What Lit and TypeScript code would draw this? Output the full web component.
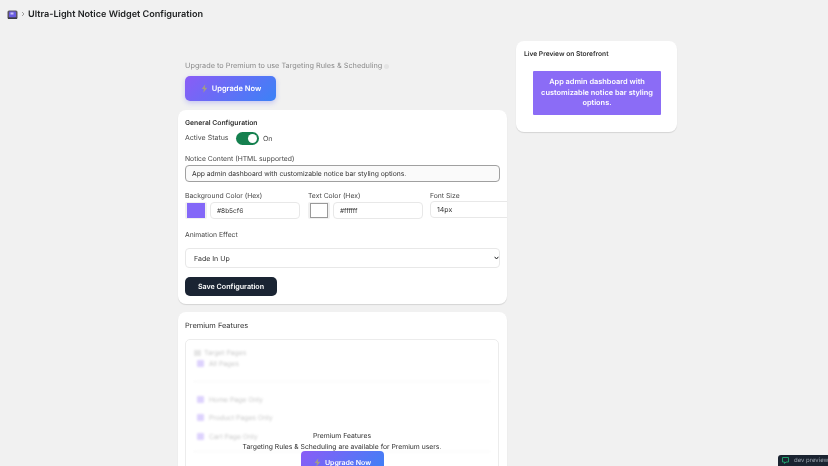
import { LitElement, html, css } from "lit";
import { customElement } from "lit/decorators.js";

const bolt = html`<svg class="bolt" viewBox="0 0 10 12" aria-hidden="true">
  <path d="M6.2 0 1 6.8h3.2L3.2 12 9 4.8H5.4z" fill="#a39c86" />
</svg>`;

const pages = ["Home Page Only", "Product Pages Only", "Cart Page Only"];

@customElement("app-root")
export class AppRoot extends LitElement {
  static styles = css`
    :host {
      display: block;
      position: relative;
      height: 466px;
      overflow: hidden;
      background: #f1f1f1;
      color: #303030;
      font-family: Inter, "Liberation Sans", sans-serif;
      font-size: 7px;
      text-rendering: geometricPrecision;
      filter: blur(0.3px);
    }
    * {
      box-sizing: border-box;
    }
    .topbar {
      display: flex;
      align-items: center;
      gap: 2px;
      height: 28px;
      padding-left: 7px;
      color: #202223;
    }
    .logo {
      width: 11px;
      height: 11px;
    }
    .crumb {
      width: 6px;
      height: 6px;
    }
    .topbar h1 {
      margin: 0;
      font-size: 9.1px;
      font-weight: 600;
    }
    .layout {
      display: flex;
      align-items: flex-start;
      gap: 9px;
      padding: 13px 0 0 178px;
    }
    .left {
      display: flex;
      flex-direction: column;
      gap: 8px;
      width: 329px;
    }
    .upgrade {
      padding: 20px 7px 0;
      margin-bottom: 1px;
    }
    .upgrade p {
      display: flex;
      align-items: center;
      gap: 2px;
      margin: 0 0 5px;
      line-height: 10px;
      color: #8a8a8a;
      font-size: 7.3px;
    }
    .upgrade p i {
      width: 5px;
      height: 5px;
      border-radius: 50%;
      background: #e4e4e4;
    }
    .btn {
      display: inline-flex;
      align-items: center;
      justify-content: center;
      gap: 4px;
      border: 0;
      padding: 0 0 0 1px;
      font-family: inherit;
      font-weight: 600;
      color: #fff;
      background: linear-gradient(135deg, #8b5cf6, #3b82f6);
      border-radius: 5px;
      text-rendering: geometricPrecision;
    }
    .btn.big {
      width: 91px;
      height: 25px;
      font-size: 7.5px;
      box-shadow: 0 2px 5px rgba(99, 102, 241, 0.3);
    }
    .bolt {
      width: 7px;
      height: 9px;
    }
    .card {
      background: #fff;
      border-radius: 8px;
      box-shadow: 0 1px 1px rgba(0, 0, 0, 0.12);
      overflow: hidden;
    }
    .general {
      height: 194px;
      padding: 8px 7px 0;
    }
    .general h2 {
      margin: 0;
      line-height: 10px;
      font-size: 6.8px;
      font-weight: 600;
    }
    label,
    .label {
      display: block;
      height: 10px;
      padding-top: 1px;
      line-height: 10px;
      color: #474747;
      font-size: 6.8px;
    }
    .status {
      display: flex;
      align-items: center;
      gap: 4px;
      margin: 4px 0 8px;
      height: 13px;
    }
    .status .label {
      padding-top: 0;
      font-size: 7px;
    }
    .status .name {
      width: 47px;
      margin-top: -1px;
    }
    .switch {
      display: flex;
      align-items: center;
      justify-content: flex-end;
      width: 23px;
      height: 13px;
      padding-right: 2px;
      border-radius: 7px;
      background: #15804f;
    }
    .switch span {
      width: 9px;
      height: 9px;
      border-radius: 50%;
      background: #fff;
    }
    .text {
      display: block;
      width: 100%;
      margin: 0;
      border: 1px solid #e8e8e8;
      border-radius: 4px;
      padding: 0 6px;
      background: #fff;
      color: #303030;
      font-family: inherit;
      font-size: 7px;
      outline: none;
      text-rendering: geometricPrecision;
    }
    .content {
      height: 17px;
      margin-top: 2px;
      border-color: #a0a0a0;
      background: #fafafa;
      font-size: 6.75px;
    }
    .colors {
      display: grid;
      grid-template-columns: 115px 114px 90px;
      gap: 8px;
      margin-top: 8px;
      margin-right: -20px;
    }
    .pair {
      display: flex;
      gap: 3px;
      margin-top: 2px;
    }
    .swatch {
      flex: none;
      width: 22px;
      height: 17px;
      padding: 1px 2px;
      border-radius: 2px;
      background: #f0f0f0;
    }
    .swatch i {
      display: block;
      width: 100%;
      height: 100%;
      background: #8468f8;
    }
    .swatch.white i {
      background: #fff;
      border: 1px solid #9a9a9a;
    }
    .pair .text {
      height: 17px;
      width: 90px;
      padding: 0 6px;
      font-size: 6.5px;
    }
    .size {
      height: 17px;
      margin-top: 1px;
    }
    .effect-label {
      margin-top: 10px;
    }
    .select-wrap {
      position: relative;
      margin-top: 9px;
    }
    select.text {
      height: 20px;
      padding: 0 8px;
      appearance: none;
    }
    .chevron {
      position: absolute;
      right: 1px;
      top: 8px;
      width: 5px;
      height: 4px;
      pointer-events: none;
    }
    .save {
      display: block;
      width: 92px;
      height: 19px;
      margin-top: 9px;
      border: 0;
      border-radius: 5px;
      background: #1a2433;
      color: #fff;
      font-family: inherit;
      font-size: 7.15px;
      font-weight: 600;
      text-rendering: geometricPrecision;
    }
    .premium {
      position: relative;
      height: 200px;
      padding: 9px 8px 0 7px;
    }
    .premium .title {
      line-height: 10px;
      color: #303030;
      font-size: 7.4px;
    }
    .locked {
      height: 180px;
      margin-top: 8px;
      padding: 8px 8px;
      border: 1px solid #ececec;
      border-radius: 5px;
    }
    .blurred {
      filter: blur(1.3px);
      opacity: 0.38;
      color: #6d6d6d;
    }
    .blurred .head {
      display: flex;
      align-items: center;
      gap: 3px;
      line-height: 9px;
      font-size: 6.8px;
    }
    .blurred .head i {
      width: 7px;
      height: 6px;
      background: #bcbcbc;
    }
    .opt {
      display: flex;
      align-items: center;
      gap: 5px;
      height: 10px;
      margin-left: 3px;
      font-size: 6.8px;
    }
    .opt i {
      width: 7px;
      height: 7px;
      border-radius: 1px;
      background: #a78bfa;
    }
    .opt.all {
      margin-top: 1px;
    }
    .rule {
      margin: 13px 0 12px;
      border-top: 1px dotted #dcdcdc;
    }
    .rule.last {
      margin-top: 9px;
    }
    .opts {
      display: flex;
      flex-direction: column;
      gap: 8.8px;
    }
    .overlay {
      position: absolute;
      left: 7px;
      right: 8px;
      top: 119px;
      text-align: center;
      line-height: 10.5px;
      color: #303030;
      font-size: 6.8px;
    }
    .btn.small {
      display: flex;
      width: 83px;
      height: 22px;
      margin: -1px auto 0;
      border-radius: 4px;
      font-size: 7px;
    }
    .right {
      width: 161px;
      height: 91px;
      padding: 8px 8px 0;
    }
    .right h2 {
      margin: 0;
      line-height: 10px;
      font-size: 6.65px;
      font-weight: 600;
    }
    .notice {
      display: flex;
      align-items: center;
      justify-content: center;
      width: 128px;
      height: 44px;
      margin: 12px 0 0 9px;
      padding: 0 6px;
      border-radius: 1px;
      background: #8b6cf6;
      color: #fff;
      text-align: center;
      font-size: 7.4px;
      font-weight: 600;
      line-height: 10.5px;
    }
    .dev {
      position: absolute;
      right: 0;
      bottom: 0;
      display: flex;
      align-items: center;
      gap: 5px;
      width: 50px;
      height: 11px;
      padding-left: 4px;
      border-radius: 3px 0 0 0;
      background: #1a2330;
      color: #9aa3ad;
      font-size: 6px;
      white-space: nowrap;
      overflow: hidden;
    }
    .dev svg {
      flex: none;
      width: 7px;
      height: 7px;
    }
  `;

  protected render() {
    return html`
      <header class="topbar">
        <svg class="logo" viewBox="0 0 11 11" aria-hidden="true">
          <rect x="0.5" y="1.5" width="10" height="8.5" rx="1.5" fill="#5b5560" />
          <rect x="2" y="2.5" width="7" height="6" rx="1" fill="#6a5ce0" />
          <rect x="3.5" y="3.5" width="3" height="2" fill="#c9c2f5" />
          <rect x="1" y="8.5" width="9" height="1.5" fill="#3a3a44" />
        </svg>
        <svg class="crumb" viewBox="0 0 6 6" aria-hidden="true">
          <path d="M2 1l2 2-2 2" fill="none" stroke="#8a8a8a" stroke-width="0.8" />
        </svg>
        <h1>Ultra-Light Notice Widget Configuration</h1>
      </header>
      <div class="layout">
        <div class="left">
          <div class="upgrade">
            <p>Upgrade to Premium to use Targeting Rules &amp; Scheduling<i></i></p>
            <button class="btn big">${bolt}Upgrade Now</button>
          </div>

          <section class="card general">
            <h2>General Configuration</h2>
            <div class="status">
              <span class="label name">Active Status</span>
              <span class="switch"><span></span></span>
              <span class="label">On</span>
            </div>
            <label>Notice Content (HTML supported)</label>
            <input
              class="text content"
              value="App admin dashboard with customizable notice bar styling options."
            />
            <div class="colors">
              <div>
                <label>Background Color (Hex)</label>
                <div class="pair">
                  <span class="swatch"><i></i></span>
                  <input class="text" value="#8b5cf6" />
                </div>
              </div>
              <div>
                <label>Text Color (Hex)</label>
                <div class="pair">
                  <span class="swatch white"><i></i></span>
                  <input class="text" value="#ffffff" />
                </div>
              </div>
              <div>
                <label>Font Size</label>
                <input class="text size" value="14px" />
              </div>
            </div>
            <label class="effect-label">Animation Effect</label>
            <div class="select-wrap">
              <select class="text">
                <option>Fade In Up</option>
              </select>
              <svg class="chevron" viewBox="0 0 5 4" aria-hidden="true">
                <path d="M.6.8 2.5 3 4.4.8" fill="none" stroke="#202223" stroke-width="1" />
              </svg>
            </div>
            <button class="save">Save Configuration</button>
          </section>

          <section class="card premium">
            <div class="title">Premium Features</div>
            <div class="locked">
              <div class="blurred">
                <div class="head"><i></i>Target Pages</div>
                <div class="opt all"><i></i>All Pages</div>
                <div class="rule"></div>
                <div class="opts">
                  ${pages.map((p) => html`<div class="opt"><i></i>${p}</div>`)}
                </div>
                <div class="rule last"></div>
              </div>
            </div>
            <div class="overlay">
              <div>Premium Features</div>
              <div>Targeting Rules &amp; Scheduling are available for Premium users.</div>
              <button class="btn small">${bolt}Upgrade Now</button>
            </div>
          </section>
        </div>

        <aside class="card right">
          <h2>Live Preview on Storefront</h2>
          <div class="notice">App admin dashboard with customizable notice bar styling options.</div>
        </aside>
      </div>
      <div class="dev">
        <svg viewBox="0 0 7 7" aria-hidden="true">
          <path d="M.5.5h6v4.5H4L2.5 6.5V5H.5z" fill="none" stroke="#1f9d6b" />
        </svg>
        dev preview
      </div>
    `;
  }
}
